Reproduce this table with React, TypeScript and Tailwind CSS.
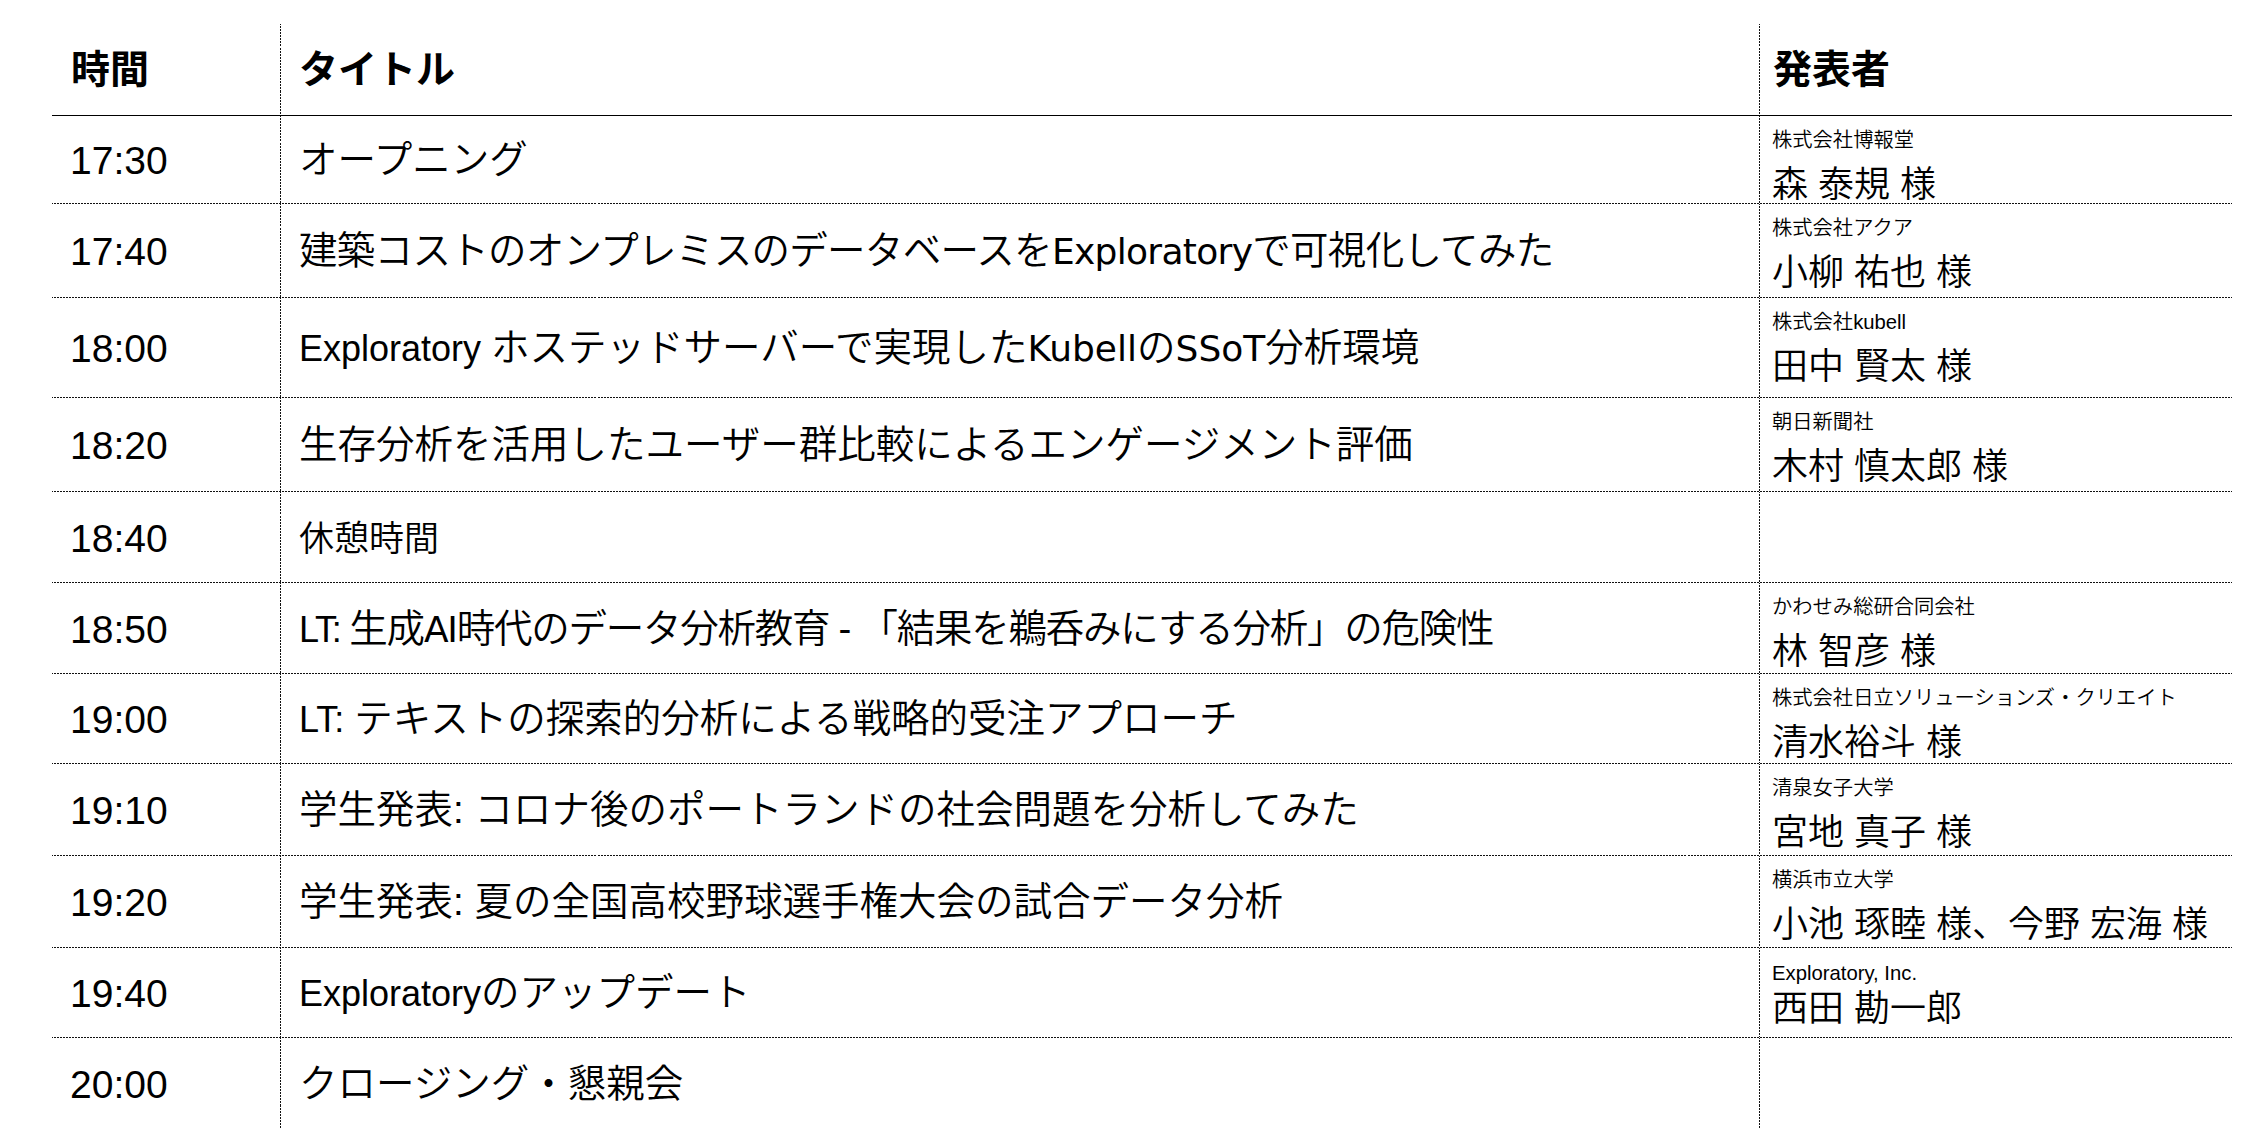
import React from "react";

type Row = {
  time: string;
  title: React.ReactNode;
  titleCls?: string;
  org?: React.ReactNode;
  name?: string;
  h: string;
  first?: boolean;
  latinOrg?: boolean;
};

// dense dotted rules, like the slide's (2px dot, 1px gap)
const ruleTop =
  "border-t border-solid [border-image:repeating-linear-gradient(90deg,#111_0_2px,transparent_2px_3px)_1]";
const ruleLeft =
  "border-l border-solid [border-image:repeating-linear-gradient(180deg,#111_0_2px,transparent_2px_3px)_1]";

// Latin run at the start of a line (Helvetica-like)
const H = ({ children }: { children: React.ReactNode }) => (
  <span className="text-[36px] font-normal">{children}</span>
);

// Latin that follows Japanese text is set wider in the slide
const W = ({ children }: { children: React.ReactNode }) => (
  <span className="font-['DejaVu_Sans'] text-[36px] font-normal">{children}</span>
);

const rows: Row[] = [
  {
    time: "17:30",
    title: "オープニング",
    org: "株式会社博報堂",
    name: "森 泰規 様",
    h: "h-[87px]",
    first: true,
  },
  {
    time: "17:40",
    title: (
      <>
        建築コストのオンプレミスのデータベースを<W>Exploratory</W>で可視化してみた
      </>
    ),
    titleCls: "tracking-[-0.7px]",
    org: "株式会社アクア",
    name: "小柳 祐也 様",
    h: "h-[94px]",
  },
  {
    time: "18:00",
    title: (
      <>
        <H>Exploratory </H>ホステッドサーバーで実現した<W>Kubell</W>の<W>SSoT</W>分析環境
      </>
    ),
    org: "株式会社kubell",
    name: "田中 賢太 様",
    h: "h-[100px]",
  },
  {
    time: "18:20",
    title: "生存分析を活用したユーザー群比較によるエンゲージメント評価",
    org: "朝日新聞社",
    name: "木村 慎太郎 様",
    h: "h-[94px]",
  },
  { time: "18:40", title: "休憩時間", titleCls: "text-[35px]", h: "h-[91px]" },
  {
    time: "18:50",
    title: (
      <>
        <H>LT: </H>生成<W>AI</W>時代のデータ分析教育 - 「結果を鵜呑みにする分析」の危険性
      </>
    ),
    titleCls: "tracking-[-1.25px]",
    org: "かわせみ総研合同会社",
    name: "林 智彦 様",
    h: "h-[91px]",
  },
  {
    time: "19:00",
    title: (
      <>
        <H>LT: </H>テキストの探索的分析による戦略的受注アプローチ
      </>
    ),
    org: "株式会社日立ソリューションズ・クリエイト",
    name: "清水裕斗 様",
    h: "h-[90px]",
  },
  {
    time: "19:10",
    title: "学生発表: コロナ後のポートランドの社会問題を分析してみた",
    org: "清泉女子大学",
    name: "宮地 真子 様",
    h: "h-[92px]",
  },
  {
    time: "19:20",
    title: "学生発表: 夏の全国高校野球選手権大会の試合データ分析",
    org: "横浜市立大学",
    name: "小池 琢睦 様、今野 宏海 様",
    h: "h-[92px]",
  },
  {
    time: "19:40",
    title: (
      <>
        <H>Exploratory</H>のアップデート
      </>
    ),
    org: "Exploratory, Inc.",
    name: "西田 勘一郎",
    h: "h-[90px]",
    latinOrg: true,
  },
  { time: "20:00", title: "クロージング・懇親会", h: "h-[91px]" },
];

export default function App() {
  return (
    <div className="min-h-screen w-full bg-white pt-[24px] pl-[52px] text-black font-['Liberation_Sans','Noto_Sans_CJK_JP',sans-serif]">
      <div className="w-[2180px]">
        {/* header */}
        <div className="grid grid-cols-[228px_1479px_473px] h-[92px] border-b border-solid border-black font-bold text-[39px] leading-none">
          <div className="flex items-center pl-[19px]">時間</div>
          <div className={`flex items-center pl-[18px] ${ruleLeft}`}>タイトル</div>
          <div className={`flex items-center pl-[13px] ${ruleLeft}`}>発表者</div>
        </div>

        {rows.map((r) => (
          <div
            key={r.time}
            className={`grid grid-cols-[228px_1479px_473px] ${r.h} ${r.first ? "" : ruleTop}`}
          >
            <div className="flex items-center pl-[18px] pt-[2px] text-[39px] leading-none">{r.time}</div>
            <div
              className={`flex items-center pl-[18px] pt-[2px] leading-none whitespace-nowrap font-[350] ${ruleLeft} ${r.titleCls ?? ""} ${r.titleCls?.includes("text-") ? "" : "text-[38.5px]"}`}
            >
              <span>{r.title}</span>
            </div>
            <div
              className={`flex flex-col pl-[12px] whitespace-nowrap font-[350] ${ruleLeft} ${r.latinOrg ? "pt-[15px]" : "pt-[14px]"}`}
            >
              {r.org && <div className="text-[20.3px] leading-none">{r.org}</div>}
              {r.name && (
                <div className={`text-[36px] leading-none ${r.latinOrg ? "mt-[8px]" : "mt-[17px]"}`}>{r.name}</div>
              )}
            </div>
          </div>
        ))}
      </div>
    </div>
  );
}
